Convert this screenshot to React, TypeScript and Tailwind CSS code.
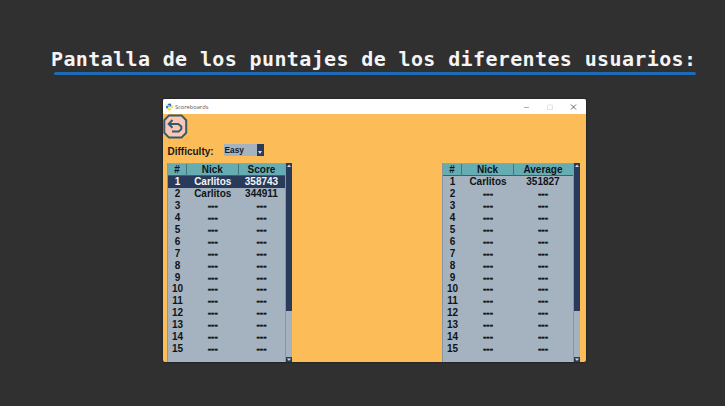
import React from "react";

type Row = [string, string];

const blank: Row[] = Array.from({ length: 13 }, (): Row => ["---", "---"]);
const scores: Row[] = [["Carlitos", "358743"], ["Carlitos", "344911"], ...blank];
const averages: Row[] = [["Carlitos", "351827"], ["---", "---"], ...blank];

function ScrollBar() {
  return (
    <div className="flex w-[7px] shrink-0 flex-col border-l border-[#8796a5] bg-[#a5b3c0]">
      <div className="flex h-[6px] items-center justify-center bg-[#283b5b]">
        <svg viewBox="0 0 6 6" className="h-[6px] w-[6px]">
          <path d="M1 4 L3 1.5 L5 4Z" fill="#d5dce5" />
        </svg>
      </div>
      <div className="h-[142px] bg-[#283b5b]" />
      <div className="grow" />
      <div className="flex h-[5px] items-center justify-center bg-[#283b5b]">
        <svg viewBox="0 0 6 5" className="h-[5px] w-[6px]">
          <path d="M1 1.5 L5 1.5 L3 4Z" fill="#d5dce5" />
        </svg>
      </div>
    </div>
  );
}

interface BoardProps {
  label: string;
  rows: Row[];
  cols: string;
  width: string;
  selected?: number;
}

function Cell({ text }: { text: string }) {
  return <span className={text === "---" ? "[-webkit-text-stroke:0.4px_#101418]" : ""}>{text}</span>;
}

function Board({ label, rows, cols, width, selected }: BoardProps) {
  return (
    <div className={`flex h-[200px] ${width} border-b border-l border-b-[#c9d5e0] border-l-[#8796a5] bg-[#a5b3c0] text-[10px] font-bold text-[#101418]`}>
      <div className="min-w-0 grow">
        <div className={`grid h-[13px] ${cols} border-y border-t-[#8fa5aa] border-b-[#3c6468] bg-[#65adb2] text-center leading-[12px]`}>
          <span className="border-r border-[#3f777b]">#</span>
          <span className="border-r border-[#3f777b]">Nick</span>
          <span>{label}</span>
        </div>
        {rows.map(([nick, value], i) => (
          <div
            key={i}
            className={`grid h-[11.95px] ${cols} text-center leading-[12.5px] ${i === selected ? "bg-[#283b5b] text-[#f3f5f8]" : ""}`}
          >
            <span>{i + 1}</span>
            <Cell text={nick} />
            <Cell text={value} />
          </div>
        ))}
      </div>
      <ScrollBar />
    </div>
  );
}

export default function App() {
  return (
    <div className="h-[406px] w-[725px] overflow-hidden bg-[#303030] pt-[46px] [font-family:'Liberation_Sans',Arial,sans-serif]">
      <h1 className="ml-[51px] h-[26px] whitespace-pre text-[20px] leading-[27px] font-bold tracking-[0.37px] text-[#f4f4f4] [font-family:'DejaVu_Sans_Mono',monospace]">
        Pantalla de los puntajes de los diferentes usuarios:
      </h1>
      <div className="ml-[54px] h-[2.5px] w-[642px] rounded-full bg-[#1d6ab5]" />

      <div className="mt-[24.5px] ml-[163px] flex h-[263px] w-[422.5px] flex-col overflow-hidden rounded-[2px] bg-[#fcbc58] shadow-[0_0_2px_#111]">
        <div className="flex h-[15px] shrink-0 items-center bg-white pl-[3px]">
          <svg viewBox="0 0 16 16" className="h-[8px] w-[7px]">
            <path d="M8 0C4 0 4 2 4 4h5v1H2C0 5 0 7 0 8s0 4 3 4h1V9c0-1 1-2 2-2h4c1 0 2-1 2-2V3c0-2-2-3-4-3z" fill="#2872a8" />
            <path d="M8 16c4 0 4-2 4-4H7v-1h7c2 0 2-2 2-3s0-4-3-4v3c0 1-1 2-2 2H6c-1 0-2 1-2 2v2c0 2 2 3 4 3z" fill="#ffd43b" />
          </svg>
          <span className="ml-[2px] text-[5.7px] leading-[8px] text-[#555] [font-family:'Open_Sans',sans-serif]">Scoreboards</span>
          <svg viewBox="0 0 56 8" className="mr-[8px] ml-auto h-[8px] w-[56px]" fill="none" strokeWidth="0.8">
            <path d="M2 4.5h5" stroke="#999" />
            <path d="M25.5 2h5v4.5h-5z" stroke="#ddd" />
            <path d="M49 1.5l5 5M54 1.5l-5 5" stroke="#444" />
          </svg>
        </div>

        <div className="h-[25px] shrink-0">
          <svg viewBox="0 0 25 25" className="h-[25px] w-[25px]">
            <path d="M6 1.4h12.5l4.7 4.8v12.6l-4.7 4.8H6l-4.7-4.8V6.2z" fill="#f9c6b8" stroke="#355b69" strokeWidth="2" strokeLinejoin="round" />
            <path d="M9.5 6L5.7 9.9l3.8 3.9M6 9.9h9.3l3 2.6v2.6l-2.6 2.5H9" fill="none" stroke="#355b69" strokeWidth="2" />
          </svg>
        </div>

        <div className="flex h-[24px] shrink-0 pt-[5px] pl-[4.5px] font-bold text-[#17191c]">
          <span className="w-[56px] text-[10px] leading-[15px]">Difficulty:</span>
          <div className="flex h-[12px] w-[40px] bg-[#a5b3c0]">
            <span className="grow pl-[1px] text-[8.3px] leading-[12px]">Easy</span>
            <div className="flex w-[7px] items-end justify-center bg-[#283b5b] pb-[2px]">
              <svg viewBox="0 0 4 3" className="h-[3px] w-[4px]">
                <path d="M0 0h4L2 3z" fill="#e0e5ec" />
              </svg>
            </div>
          </div>
        </div>

        <div className="flex shrink-0 justify-between pr-[5.5px] pl-[4px]">
          <Board label="Score" rows={scores} selected={0} width="w-[124.5px]" cols="grid-cols-[19px_51.5px_46px]" />
          <Board label="Average" rows={averages} width="w-[138px]" cols="grid-cols-[19px_52px_58px]" />
        </div>
      </div>
    </div>
  );
}
